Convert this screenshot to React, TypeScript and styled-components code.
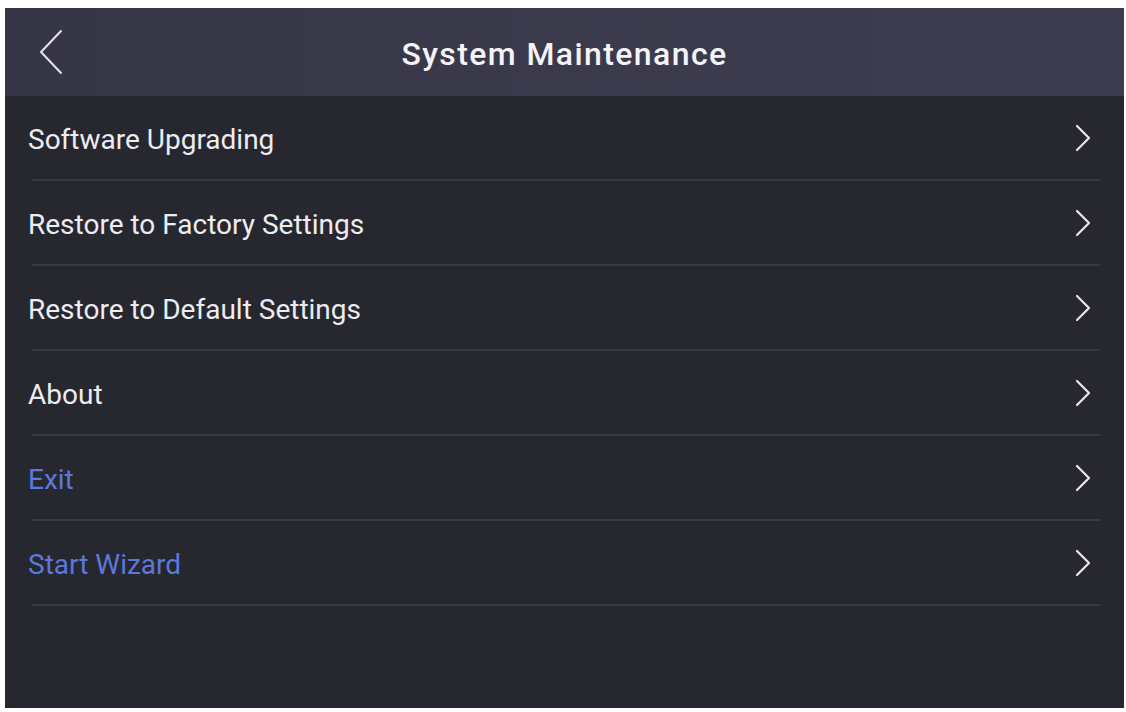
import React from "react";
import styled, { createGlobalStyle } from "styled-components";

const GlobalStyle = createGlobalStyle`
  html, body {
    margin: 0;
    background: #ffffff;
  }
  body {
    font-family: Roboto, "Noto Sans", "Liberation Sans", sans-serif;
  }
`;

const items = [
  { label: "Software Upgrading", accent: false },
  { label: "Restore to Factory Settings", accent: false },
  { label: "Restore to Default Settings", accent: false },
  { label: "About", accent: false },
  { label: "Exit", accent: true },
  { label: "Start Wizard", accent: true },
];

const ChevronRight = () => (
  <svg width="16" height="28" viewBox="0 0 16 28" fill="none">
    <path
      d="M2 2 L14 14 L2 26"
      stroke="#e8e8ee"
      strokeWidth="2.2"
      strokeLinecap="round"
      strokeLinejoin="round"
    />
  </svg>
);

const ChevronLeft = () => (
  <svg width="26" height="46" viewBox="0 0 26 46" fill="none">
    <path
      d="M23 2 L3 23 L23 44"
      stroke="#e4e4ec"
      strokeWidth="2"
      strokeLinecap="round"
      strokeLinejoin="round"
    />
  </svg>
);

const App = () => {
  return (
    <>
      <GlobalStyle />
      <Frame>
        <Screen>
          <Header>
            <BackButton>
              <ChevronLeft />
            </BackButton>
            <Title>System Maintenance</Title>
            <HeaderSpacer />
          </Header>
          <List>
            {items.map((item) => (
              <React.Fragment key={item.label}>
                <Row>
                  <Label accent={item.accent}>{item.label}</Label>
                  <ChevronRight />
                </Row>
                <Divider />
              </React.Fragment>
            ))}
          </List>
        </Screen>
      </Frame>
    </>
  );
};

const Frame = styled.div`
  padding: 8px 2px 4px 5px;
  height: 712px;
  box-sizing: border-box;
`;

const Screen = styled.div`
  height: 100%;
  display: flex;
  flex-direction: column;
  background: #272730;
`;

const Header = styled.header`
  height: 88px;
  flex-shrink: 0;
  display: flex;
  align-items: center;
  background: linear-gradient(90deg, #363545 0%, #3c3b4d 60%, #3d3c4e 100%);
`;

const BackButton = styled.button`
  width: 80px;
  height: 88px;
  padding: 0 0 0 33px;
  display: flex;
  align-items: center;
  background: none;
  border: none;
`;

const HeaderSpacer = styled.div`
  width: 80px;
`;

const Title = styled.h1`
  flex: 1;
  margin: 0;
  padding-top: 3px;
  text-align: center;
  color: #f4f4f8;
  font-size: 32px;
  font-weight: 500;
  letter-spacing: 1.4px;
`;

const List = styled.div`
  display: flex;
  flex-direction: column;
`;

const Row = styled.div`
  height: 83px;
  display: flex;
  align-items: center;
  justify-content: space-between;
  padding: 0 33px 0 23px;
`;

const Label = styled.span<{ accent: boolean }>`
  margin-top: 4px;
  font-size: 28px;
  color: ${({ accent }) => (accent ? "#5b78dc" : "#ececf1")};
`;

const Divider = styled.div`
  height: 2px;
  margin: 0 24px 0 27px;
  background: #393944;
`;

export default App;
